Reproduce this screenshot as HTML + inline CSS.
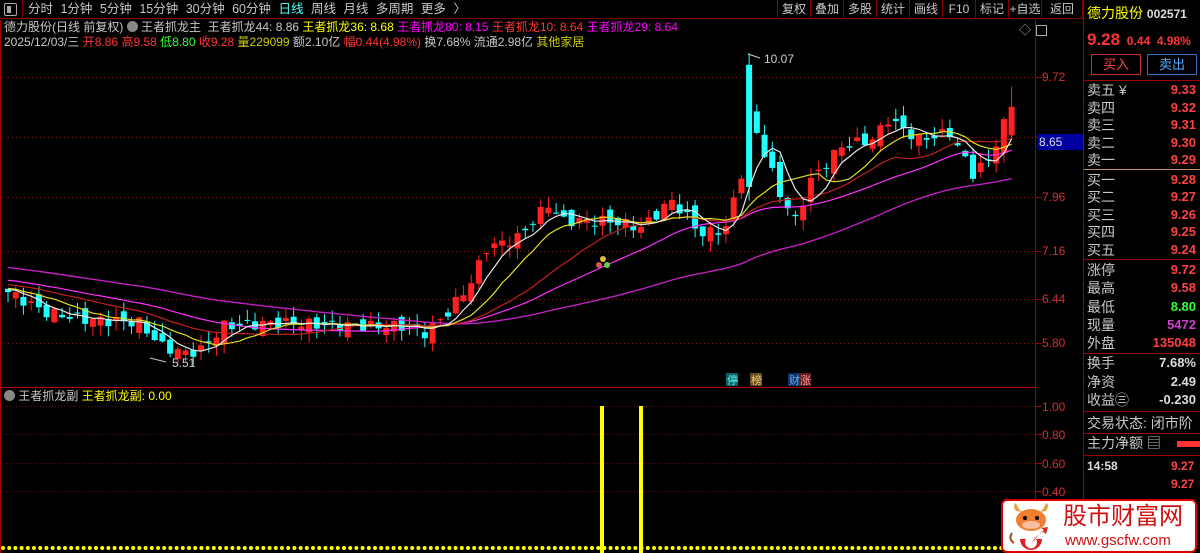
<!DOCTYPE html>
<html><head><meta charset="utf-8">
<style>
*{margin:0;padding:0;box-sizing:border-box}
body{width:1200px;height:553px;background:#000;overflow:hidden;position:relative;font-family:"Liberation Sans","Noto Sans CJK SC",sans-serif;font-size:12px;color:#c8c8c8}
.a{position:absolute;white-space:nowrap;line-height:1}
#top{position:absolute;left:0;top:0;width:1083px;height:19px;border-bottom:1px solid #800000}
.btn{position:absolute;top:0;height:19px;line-height:18px;border-left:1px solid #800000;text-align:center;color:#c8c8c8;font-size:12px}
.rp{position:absolute;left:1083px;width:117px;border-left:1px solid #a00000}
.row{position:absolute;left:1087px;width:112px;height:18px;font-size:14px;line-height:18px;color:#c8c8c8}
.row b{position:absolute;right:3px;top:0;font-weight:bold;font-size:13px;color:#ff4040}
.hl{position:absolute;left:1084px;width:116px;height:1px;background:#a00000}
</style></head><body>
<div id="top"></div>
<div class="a" style="left:4px;top:3px;width:13px;height:13px;border:1px solid #aaa;border-radius:2px"></div>
<div class="a" style="left:7px;top:6px;width:4px;height:7px;background:#aaa"></div>
<div class="a" style="left:22px;top:0;width:1px;height:19px;background:#800000"></div>
<div class="a" style="left:28px;top:3px;font-size:12.5px;word-spacing:4px;color:#c8c8c8">分时 1分钟 5分钟 15分钟 30分钟 60分钟 <span style="color:#5ff">日线</span> 周线 月线 多周期 更多 〉</div>
<div class="btn" style="left:777px;width:33px">复权</div>
<div class="btn" style="left:810px;width:33px">叠加</div>
<div class="btn" style="left:843px;width:33px">多股</div>
<div class="btn" style="left:876px;width:33px">统计</div>
<div class="btn" style="left:909px;width:33px">画线</div>
<div class="btn" style="left:942px;width:33px">F10</div>
<div class="btn" style="left:975px;width:33px">标记</div>
<div class="btn" style="left:1008px;width:33px">+自选</div>
<div class="btn" style="left:1041px;width:42px;border-right:1px solid #800000">返回</div>

<div class="a" style="left:4px;top:21px;font-size:12px">德力股份(日线 前复权) <span style="display:inline-block;width:11px;height:11px;border-radius:6px;background:#888;vertical-align:-1px"></span> 王者抓龙主&nbsp; 王者抓龙44: 8.86 <span style="color:#ff0">王者抓龙36: 8.68</span> <span style="color:#f0f">王者抓龙80: 8.15</span> <span style="color:#f33">王者抓龙10: 8.64</span> <span style="color:#f0f">王者抓龙29: 8.64</span></div>
<div class="a" style="left:4px;top:36px;font-size:12px">2025/12/03/三 <span style="color:#f33">开8.86</span> <span style="color:#f33">高9.58</span> <span style="color:#3f3">低8.80</span> <span style="color:#f33">收9.28</span> <span style="color:#cc0">量229099</span> 额2.10亿 <span style="color:#f33">幅0.44(4.98%)</span> 换7.68% 流通2.98亿 <span style="color:#cc0">其他家居</span></div>
<div class="a" style="left:1019px;top:24px;color:#aaa;font-size:12px">◇</div>
<div class="a" style="left:1036px;top:25px;width:11px;height:11px;border:1px solid #aaa"></div>

<svg id="ch" width="1200" height="553" style="position:absolute;left:0;top:0"></svg>

<div class="a" style="left:4px;top:390px;font-size:12px"><span style="display:inline-block;width:11px;height:11px;border-radius:6px;background:#888;vertical-align:-1px"></span> 王者抓龙副 <span style="color:#ff0">王者抓龙副: 0.00</span></div>
<div class="a" style="left:1037px;top:134px;width:46px;height:16px;background:#0000a0;color:#ddd;font-size:12px;line-height:16px;padding-left:2px">8.65</div>

<!-- right panel -->
<div class="rp" style="top:0;height:553px"></div>
<div class="a" style="left:1087px;top:6px;font-size:14px;color:#ff0">德力股份 <span style="color:#ddd;font-size:12px;font-weight:bold">002571</span></div>
<div class="a" style="left:1087px;top:31px;color:#f33;font-weight:bold"><span style="font-size:17px">9.28</span> <span style="font-size:12px">&nbsp;0.44&nbsp; 4.98%</span></div>
<div class="a" style="left:1091px;top:54px;width:50px;height:21px;border:1px solid #c03030;color:#f44;text-align:center;line-height:19px;font-size:13px">买入</div>
<div class="a" style="left:1147px;top:54px;width:50px;height:21px;border:1px solid #3070c0;color:#5af;text-align:center;line-height:19px;font-size:13px">卖出</div>
<div class="hl" style="top:80px"></div>
<div class="row" style="top:81px">卖五 ¥<b>9.33</b></div>
<div class="row" style="top:99px">卖四<b>9.32</b></div>
<div class="row" style="top:116px">卖三<b>9.31</b></div>
<div class="row" style="top:134px">卖二<b>9.30</b></div>
<div class="row" style="top:151px">卖一<b>9.29</b></div>
<div class="hl" style="top:169px;background:#c09060"></div>
<div class="row" style="top:171px">买一<b>9.28</b></div>
<div class="row" style="top:188px">买二<b>9.27</b></div>
<div class="row" style="top:206px">买三<b>9.26</b></div>
<div class="row" style="top:223px">买四<b>9.25</b></div>
<div class="row" style="top:241px">买五<b>9.24</b></div>
<div class="hl" style="top:259px"></div>
<div class="row" style="top:261px">涨停<b>9.72</b></div>
<div class="row" style="top:279px">最高<b>9.58</b></div>
<div class="row" style="top:298px">最低<b style="color:#3f3">8.80</b></div>
<div class="row" style="top:316px">现量<b style="color:#d040d0">5472</b></div>
<div class="row" style="top:334px">外盘<b>135048</b></div>
<div class="hl" style="top:353px"></div>
<div class="row" style="top:354px">换手<b style="color:#ddd">7.68%</b></div>
<div class="row" style="top:373px">净资<b style="color:#ddd">2.49</b></div>
<div class="row" style="top:391px">收益㊂<b style="color:#ddd">-0.230</b></div>
<div class="hl" style="top:411px"></div>
<div class="row" style="top:414px">交易状态: 闭市阶</div>
<div class="hl" style="top:433px"></div>
<div class="row" style="top:434px">主力净额 ▤</div>
<div class="a" style="left:1177px;top:441px;width:23px;height:6px;background:#f33"></div>
<div class="hl" style="top:455px"></div>
<div class="a" style="left:1087px;top:460px;font-size:12px;font-weight:bold;color:#ddd">14:58</div>
<div class="a" style="left:1171px;top:460px;font-size:12px;font-weight:bold;color:#f44">9.27</div>
<div class="a" style="left:1171px;top:478px;font-size:12px;font-weight:bold;color:#f44">9.27</div>

<!-- watermark -->
<div class="a" style="left:1001px;top:499px;width:196px;height:54px;background:#fff;border:2px solid #d00;border-radius:6px"></div>
<svg class="a" style="left:1008px;top:503px" width="46" height="48" viewBox="0 0 46 48">
<path d="M8 8 Q4 2 8 0 Q10 6 14 9Z M38 8 Q42 2 38 0 Q36 6 32 9Z" fill="#e8a040"/>
<ellipse cx="23" cy="17" rx="15" ry="11" fill="#f08030"/>
<circle cx="17" cy="15" r="2" fill="#000"/><circle cx="29" cy="15" r="2" fill="#000"/>
<ellipse cx="23" cy="22" rx="9" ry="4" fill="#f8c0a0"/>
<path d="M12 36 A11 11 0 1 0 34 36 L28 36 A6 6 0 1 1 18 36Z" fill="#e02020"/>
<path d="M24 40 L34 28 L38 31 L40 24 L33 25 L36 27 L26 36Z" fill="#e02020"/>
<path d="M4 30 Q0 36 6 40" stroke="#a05020" stroke-width="2" fill="none"/>
</svg>
<div class="a" style="left:1063px;top:505px;font-size:24px;color:#d01010">股市财富网</div>
<div class="a" style="left:1065px;top:533px;font-size:15px;color:#d01010">www.gscfw.com</div>

<script>
var s=document.getElementById('ch'),h='';
function L(x1,y1,x2,y2,c,w,d){h+='<line x1="'+x1+'" y1="'+y1+'" x2="'+x2+'" y2="'+y2+'" stroke="'+c+'" stroke-width="'+(w||1)+'"'+(d?' stroke-dasharray="'+d+'"':'')+'/>';}
function T(x,y,t,c,fs){h+='<text x="'+x+'" y="'+y+'" fill="'+c+'" font-size="'+(fs||12)+'" font-family="Liberation Sans, Noto Sans CJK SC, sans-serif">'+t+'</text>';}
L(0.5,20,0.5,553,'#a00000');L(1035.5,20,1035.5,553,'#a00000');L(0,387.5,1036,387.5,'#c00000');
var gy=[77,137,197,251,299,343];
gy.forEach(function(y){L(4,y+.5,1035,y+.5,'#801818',1,'1,3');L(1036,y+.5,1042,y+.5,'#a00000');});
[[77,'9.72'],[197,'7.96'],[251,'7.16'],[299,'6.44'],[343,'5.80']].forEach(function(a){T(1042,a[0]+4,a[1],'#d03030');});
[[406,'1.00'],[434,'0.80'],[463,'0.60'],[491,'0.40']].forEach(function(a){L(4,a[0]+.5,1035,a[0]+.5,'#601010',1,'1,2');L(1036,a[0]+.5,1042,a[0]+.5,'#a00000');T(1042,a[0]+5,a[1],'#d03030');});
function Y(p){return 77+(9.72-p)*67.86;}
var kp=[[0,6.55],[5,6.25],[10,6.15],[17,6.1],[20,5.75],[23,5.65],[25,5.7],[28,6.05],[35,6.1],[45,6.05],[52,6.05],[54,5.95],[57,6.25],[60,6.7],[62,7.2],[66,7.35],[70,7.85],[72,7.6],[78,7.6],[82,7.5],[86,7.9],[90,7.4],[93,7.5],[95,8.3],[96,9.25],[97,8.9],[100,8.0],[102,7.6],[104,8.2],[108,8.7],[112,8.8],[114,9.1],[118,8.8],[122,8.9],[125,8.3],[127,8.5],[130,9.28]];
var N=131,C=[];
for(var i=0;i<N;i++){for(var k=0;k<kp.length-1;k++)if(i>=kp[k][0]&&i<=kp[k+1][0])break;var a=kp[k],b=kp[k+1];var t=(i-a[0])/(b[0]-a[0]||1);C.push(a[1]+(b[1]-a[1])*t+(i==130?0:Math.sin(i*2.3)*0.08));}
var pre=[];for(i=0;i<60;i++)pre.push(7.3-0.75*i/59+Math.sin(i)*0.05);
var all=pre.concat(C);
function MA(n){var r=[];for(var i=0;i<N;i++){var j=i+60,sm=0;for(var q=0;q<n;q++)sm+=all[j-q];r.push(sm/n);}return r;}
var X=function(i){return 5+i*7.72;};
for(i=0;i<N;i++){var c=C[i],o=(i?C[i-1]:6.6)+Math.sin(i*5.1)*0.1;var up=c>=o;var hi=Math.max(o,c)+Math.abs(Math.sin(i*3.7))*0.15,lo=Math.min(o,c)-Math.abs(Math.cos(i*2.9))*0.15;
if(i==96){o=8.1;c=9.9;hi=10.07;lo=7.9;up=false;}
if(i==130){o=8.86;hi=9.58;lo=8.80;}
var col=up?'#ff2020':'#20ffff',x=X(i);
L(x+3,Y(hi),x+3,Y(lo),col);
var yt=Y(Math.max(o,c)),hh=Math.max(1,Y(Math.min(o,c))-yt);
h+='<rect x="'+x+'" y="'+yt+'" width="6" height="'+hh+'" fill="'+col+'"/>';}
function P(a,c,w){var d='';for(var i=0;i<N;i++)d+=(i?'L':'M')+(X(i)+3).toFixed(1)+' '+Y(a[i]).toFixed(1);h+='<path d="'+d+'" stroke="'+c+'" stroke-width="'+(w||1)+'" fill="none"/>';}
P(MA(60),'#c020c0',1.4);P(MA(30),'#ff30ff',1.2);P(MA(20),'#c02020',1.2);P(MA(10),'#e0e020',1.2);P(MA(5),'#e8e8e8',1.2);
L(748,54,760,58,'#ccc');T(764,63,'10.07','#ccc');
L(150,358,166,362,'#ccc');T(172,367,'5.51','#ccc');
h+='<circle cx="603" cy="259" r="3" fill="#e0c040"/><circle cx="599" cy="265" r="3" fill="#e05050"/><circle cx="607" cy="265" r="3" fill="#60d040"/>';
h+='<rect x="726" y="373" width="12" height="13" fill="#106060"/><rect x="750" y="373" width="12" height="13" fill="#605020"/><rect x="788" y="373" width="12" height="13" fill="#103060"/><rect x="799" y="373" width="12" height="13" fill="#602020"/>';
T(727,384,'停','#5ff',11);T(751,384,'榜','#fc6',11);T(789,384,'财','#6af',11);T(800,384,'涨','#f99',11);
h+='<rect x="600" y="406" width="4" height="147" fill="#ff0"/><rect x="639" y="406" width="4" height="147" fill="#ff0"/>';
for(var x=3;x<1035;x+=6.2)h+='<circle cx="'+x.toFixed(1)+'" cy="548" r="2" fill="#ff0"/>';
s.innerHTML=h;
</script>
</body></html>
